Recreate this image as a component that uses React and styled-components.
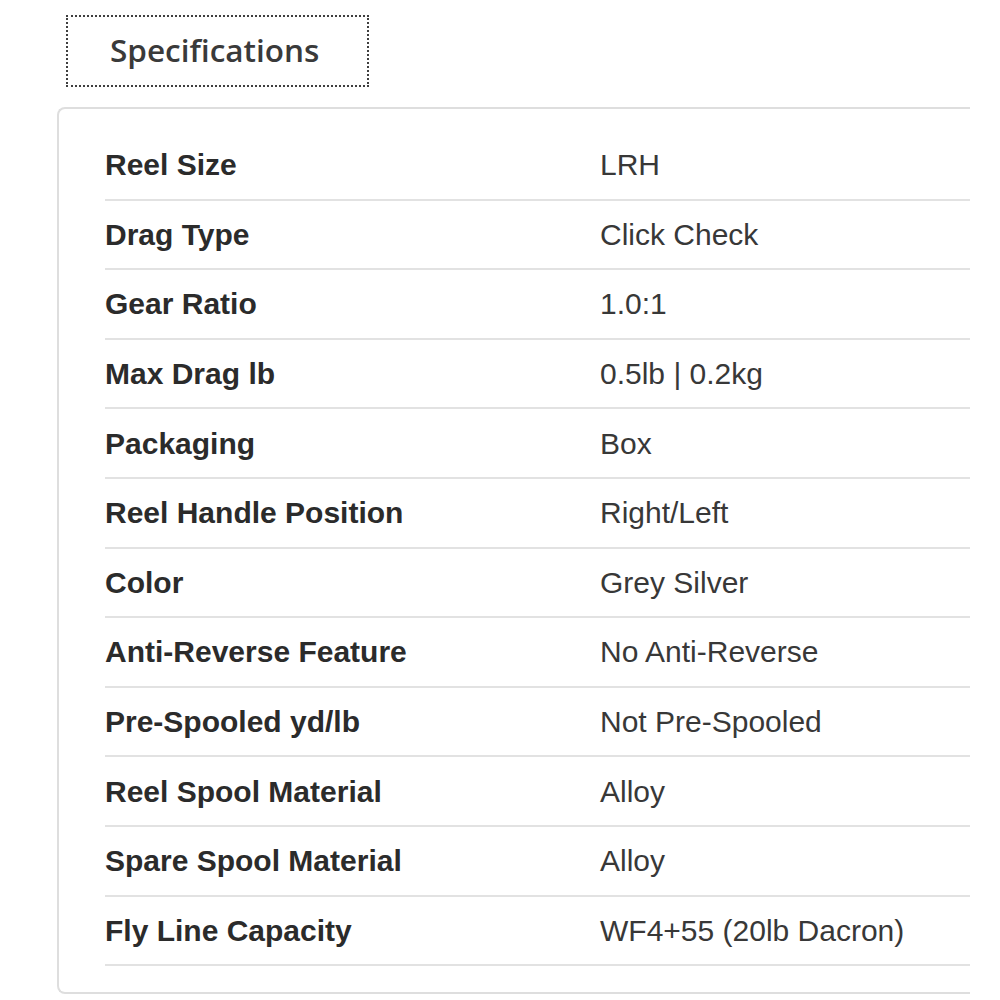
import React from "react";
import styled, { createGlobalStyle } from "styled-components";

const Global = createGlobalStyle`
  html, body { margin: 0; padding: 0; background: #fff; }
  body { font-family: "Liberation Sans", Arial, sans-serif; }
`;

const Page = styled.div`
  width: 1000px;
  height: 1000px;
  overflow: hidden;
  padding-top: 15px;
  box-sizing: border-box;
`;

const TabHeading = styled.div`
  margin-left: 66px;
  width: 303px;
  height: 72px;
  box-sizing: border-box;
  border: 2px dotted #3f3f3f;
  display: flex;
  align-items: center;
  padding-left: 42px;
  padding-bottom: 3px;
  font-family: "Open Sans", "Noto Sans", sans-serif;
  font-weight: 600;
  font-size: 31.5px;
  color: #3a3a3a;
`;

const Card = styled.div`
  margin-top: 20px;
  margin-left: 57px;
  width: 913px;
  box-sizing: border-box;
  border: 2px solid #dedede;
  border-right: none;
  border-radius: 8px 0 0 8px;
  padding: 22px 0 26px 46px;
`;

const Row = styled.div`
  display: grid;
  grid-template-columns: 495px 1fr;
  align-items: center;
  height: 69.6px;
  box-sizing: border-box;
  border-bottom: 2px solid #e2e2e2;
  padding-top: 1px;
`;

const Label = styled.div`
  font-family: "Liberation Sans", Arial, sans-serif;
  font-weight: bold;
  font-size: 30px;
  color: #2b2b2b;
  white-space: nowrap;
`;

const Value = styled.div`
  font-family: "Liberation Sans", Arial, sans-serif;
  font-size: 30px;
  color: #383838;
  white-space: nowrap;
`;

const specs = [
  ["Reel Size", "LRH"],
  ["Drag Type", "Click Check"],
  ["Gear Ratio", "1.0:1"],
  ["Max Drag lb", "0.5lb | 0.2kg"],
  ["Packaging", "Box"],
  ["Reel Handle Position", "Right/Left"],
  ["Color", "Grey Silver"],
  ["Anti-Reverse Feature", "No Anti-Reverse"],
  ["Pre-Spooled yd/lb", "Not Pre-Spooled"],
  ["Reel Spool Material", "Alloy"],
  ["Spare Spool Material", "Alloy"],
  ["Fly Line Capacity", "WF4+55 (20lb Dacron)"],
];

export default function App() {
  return (
    <>
      <Global />
      <Page>
        <TabHeading>Specifications</TabHeading>
        <Card>
          {specs.map(([k, v]) => (
            <Row key={k}>
              <Label>{k}</Label>
              <Value>{v}</Value>
            </Row>
          ))}
        </Card>
      </Page>
    </>
  );
}
